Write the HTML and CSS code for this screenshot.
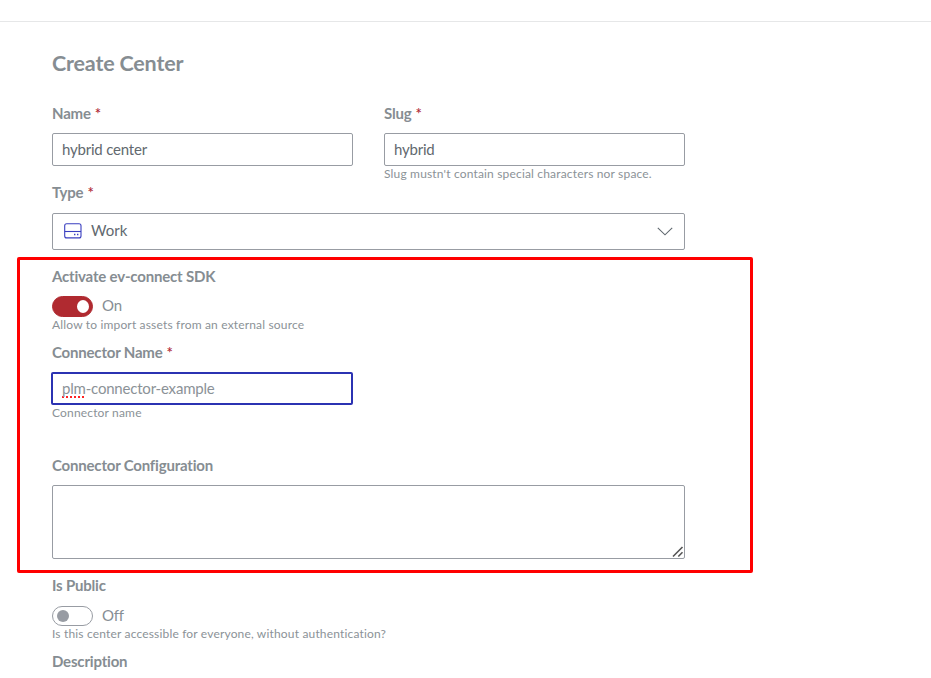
FILE: index.html
```html
<!DOCTYPE html>
<html lang="en">
<head>
<meta charset="utf-8">
<title>Create Center</title>
<link rel="stylesheet" href="styles.css">
</head>
<body>
<header class="topbar"></header>
<main class="form">
  <h1 class="title">Create Center</h1>
  <div class="row">
    <div class="field">
      <div class="label">Name <span class="req">*</span></div>
      <div class="input">hybrid center</div>
    </div>
    <div class="field">
      <div class="label">Slug <span class="req">*</span></div>
      <div class="input">hybrid</div>
      <div class="hint">Slug mustn't contain special characters nor space.</div>
    </div>
  </div>
  <div class="label label-type">Type <span class="req">*</span></div>
  <div class="select">
    <svg class="drive" width="18" height="16" viewBox="0 0 18 16" fill="none" stroke="#3a3fc0" stroke-width="1.1"><rect x=".7" y=".7" width="16.3" height="14.2" rx="2"/><path d="M.7 8.5H17"/><path d="M10 11.5h1.4M13 11.5h1.4" stroke-width="1.4"/></svg>
    <span class="choice">Work</span>
    <svg class="chevron" width="16" height="9" viewBox="0 0 16 9" fill="none" stroke="#60686f" stroke-width="1.1"><path d="M.8.8 8 7.8 15.2.8"/></svg>
  </div>
  <section class="sdk">
    <div class="label">Activate ev-connect SDK</div>
    <div class="switch-row"><span class="switch on"><i></i></span><span class="state">On</span></div>
    <div class="hint">Allow to import assets from an external source</div>
    <div class="label label-connector">Connector Name <span class="req">*</span></div>
    <div class="input focused"><span class="misspelled">plm</span>-connector-example</div>
    <div class="hint">Connector name</div>
    <div class="label label-config">Connector Configuration</div>
    <div class="textarea"><svg width="12" height="12" viewBox="0 0 12 12" stroke="#555" stroke-width="1.6"><path d="M1 10.500 10.500 1M6.300 10.500 10.500 6.300"/></svg></div>
    <div class="highlight"></div>
  </section>
  <div class="label label-public">Is Public</div>
  <div class="switch-row off-row"><span class="switch"><i></i></span><span class="state">Off</span></div>
  <div class="hint">Is this center accessible for everyone, without authentication?</div>
  <div class="label label-desc">Description</div>
</main>
</body>
</html>
```
FILE: styles.css
```css
* { box-sizing: border-box; }
body { margin: 0; height: 678px; overflow: hidden; background: #fff; color: #868e94; font: 15px/20px Lato, "Liberation Sans", sans-serif; }
.topbar { height: 22px; border-bottom: 1px solid #e6e7e8; }
.form { width: 633px; margin-left: 52px; }
.title { margin: 0; padding-top: 27px; height: 81px; font-size: 21.5px; line-height: 28px; font-weight: 700; letter-spacing: -.18px; color: #868d92; }
.row { display: flex; gap: 31px; height: 79px; }
.field { width: 301px; }
.label { height: 20px; margin-bottom: 10px; font-weight: 700; letter-spacing: -.19px; color: #868d92; white-space: nowrap; }
.req { color: #b02a37; font-weight: 600; margin-left: .5px; }
.input { width: 301px; height: 33px; border: 1px solid #989ca3; border-radius: 2px; padding: 0 9px; line-height: 31px; letter-spacing: -.2px; color: #62696f; white-space: nowrap; }
.hint { height: 16px; font-size: 12px; line-height: 16px; letter-spacing: .17px; color: #8b9297; white-space: nowrap; }
.label-type { margin-bottom: 11px; }
.select { display: flex; align-items: center; height: 37px; border: 1px solid #989ca3; border-radius: 2px; padding: 0 12px 3px 11px; color: #62696f; }
.drive { margin: 1px 0 0 -.5px; }
.choice { margin-left: 9.5px; }
.chevron { margin: 3px -.5px 0 auto; }
.sdk { position: relative; padding-top: 16px; }
.highlight { position: absolute; top: 7px; left: -35px; width: 736px; height: 316px; border: 3px solid #f00; border-radius: 2px; }
.switch-row { display: flex; height: 21px; align-items: center; }
.switch { width: 41px; height: 20px; border: 1px solid #989ca3; border-radius: 11px; display: flex; align-items: center; padding: 0 4px; }
.switch i { width: 12px; height: 12px; border-radius: 50%; background: #989ca3; }
.switch.on { height: 21px; background: #b02a30; border-color: #b02a30; justify-content: flex-end; padding-right: 3px; }
.switch.on i { background: #fff; height: 13px; }
.state { margin: -2px 0 0 9px; letter-spacing: -.2px; }
.on + .state { margin-top: -3px; }
.label-connector { margin-top: 9px; }
.focused { width: 302px; margin-left: -1px; border: 2px solid #2b32b2; line-height: 29px; color: #8b9297; }
.misspelled { text-decoration: underline dotted #f22; text-decoration-thickness: 2px; text-underline-offset: 2px; text-decoration-skip-ink: none; }
.label-config { margin-top: 34px; }
.textarea { height: 74px; border: 1px solid #989ca3; border-radius: 2px; display: flex; justify-content: flex-end; align-items: flex-end; padding: 0 .5px 0 0; }
.label-public { margin-top: 16px; margin-bottom: 11px; }
.off-row { height: 20px; }
.label-desc { margin-top: 9px; }
```
